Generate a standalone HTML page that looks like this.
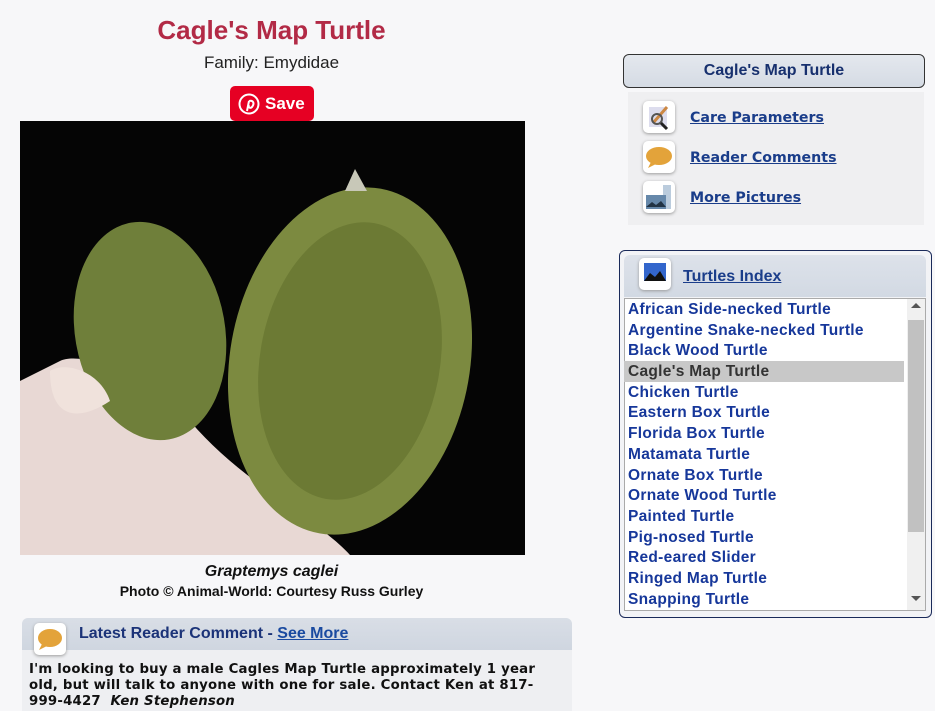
<!DOCTYPE html>
<html><head><meta charset="utf-8"><style>
body{margin:0;width:935px;height:711px;background:#f7f7f9;font-family:"Liberation Sans",sans-serif;position:relative;overflow:hidden}
.a{position:absolute}
h1{position:absolute;left:0;width:543px;top:15px;margin:0;text-align:center;color:#b22a46;font-size:26px;font-weight:bold}
.fam{left:0;width:543px;top:53px;text-align:center;font-size:17px;color:#222}
.save{left:230px;top:86px;width:84px;height:35px;background:#e60023;border-radius:5px;color:#fff;font-weight:bold;font-size:17px}
.vb{font-family:"DejaVu Sans",sans-serif;font-weight:bold}
.lnk{color:#1a3d8a;text-decoration:underline}
.list div{height:20.7px;line-height:21px;padding-left:4px;font-size:15.5px;font-weight:bold;color:#16379a;font-family:"Liberation Sans",sans-serif;letter-spacing:0.3px}
.ic{width:32px;height:32px;background:#fff;border-radius:5px;box-shadow:0 1px 3px #999}
</style></head><body>
<h1>Cagle's Map Turtle</h1>
<div class="a fam">Family: Emydidae</div>
<div class="a save"><svg class="a" style="left:8px;top:7px" width="22" height="22" viewBox="0 0 22 22"><circle cx="11" cy="11" r="9.5" fill="none" stroke="#fff" stroke-width="2"/><path d="M9 18 L11 8 M11 8 c4-1 6 2 3 6 c-2 2-4 0-3-2" fill="none" stroke="#fff" stroke-width="2"/></svg><span class="a" style="left:35px;top:8px">Save</span></div>
<svg class="a" style="left:20px;top:121px" width="505" height="434" viewBox="0 0 505 434">
<rect width="505" height="434" fill="#050505"/>
<path d="M40 240 C60 230 120 250 170 300 C220 360 300 400 330 434 L0 434 L0 260 Z" fill="#e8d8d4"/>
<ellipse cx="130" cy="210" rx="75" ry="110" transform="rotate(-10 130 210)" fill="#6f7f3a"/>
<ellipse cx="330" cy="240" rx="120" ry="175" transform="rotate(10 330 240)" fill="#7c8a40"/>
<ellipse cx="330" cy="240" rx="90" ry="140" transform="rotate(10 330 240)" fill="#6c7a34"/>
<path d="M325 70 l10-22 l12 22z" fill="#c8c8b8"/>
<path d="M30 250 C45 240 80 250 90 280 C60 300 30 300 30 250Z" fill="#f0e2dc"/>
</svg>
<div class="a" style="left:0;width:543px;top:563px;text-align:center;font-size:16px;font-weight:bold;font-style:italic;color:#111">Graptemys caglei</div>
<div class="a" style="left:0;width:543px;top:583px;text-align:center;font-size:14px;font-weight:bold;color:#111">Photo © Animal-World: Courtesy Russ Gurley</div>
<div class="a" style="left:22px;top:618px;width:550px;height:93px;background:#eeeff2;border-radius:6px 6px 0 0"></div>
<div class="a" style="left:22px;top:618px;width:550px;height:32px;background:linear-gradient(#d9dee6,#cfd6e0);border-radius:6px 6px 0 0"></div>
<div class="a ic" style="left:34px;top:623px"><svg width="32" height="32"><ellipse cx="16" cy="15" rx="12" ry="9" fill="#e3a33a"/><path d="M8 21 l-3 6 l8-4z" fill="#e3a33a"/></svg></div>
<div class="a" style="left:79px;top:625px;font-size:16px;font-weight:bold;color:#1b3378">Latest Reader Comment - <span class="lnk" style="color:#1a4aa0">See More</span></div>
<div class="a vb" style="left:29px;top:662px;width:535px;font-size:13.3px;line-height:16px;color:#111;letter-spacing:0.2px">I'm looking to buy a male Cagles Map Turtle approximately 1 year old, but will talk to anyone with one for sale. Contact Ken at 817-999-4427&nbsp; <i>Ken Stephenson</i></div>

<div class="a" style="left:623px;top:54px;width:300px;height:32px;border:1px solid #333;border-radius:6px;background:linear-gradient(#e4e8ee,#d5dbe4);text-align:center;line-height:32px;font-size:16px;font-weight:bold;color:#17306e">Cagle's Map Turtle</div>
<div class="a" style="left:628px;top:92px;width:296px;height:133px;background:#efeff1"></div>
<div class="a ic" style="left:643px;top:101px"><svg width="32" height="32"><rect x="6" y="6" width="18" height="20" fill="#dde"/><path d="M10 22 L24 6" stroke="#c84" stroke-width="3"/><circle cx="14" cy="18" r="5" fill="none" stroke="#555" stroke-width="2"/><path d="M18 22 l6 6" stroke="#222" stroke-width="3"/></svg></div>
<div class="a ic" style="left:643px;top:141px"><svg width="32" height="32"><ellipse cx="16" cy="15" rx="13" ry="9" fill="#e3a33a"/><path d="M8 21 l-3 6 l8-4z" fill="#e3a33a"/></svg></div>
<div class="a ic" style="left:643px;top:181px"><svg width="32" height="32"><rect x="20" y="4" width="8" height="24" fill="#bcd"/><rect x="3" y="14" width="20" height="14" fill="#68a"/><path d="M3 26 l6-5 l4 3 l5-4 l5 6z" fill="#234"/></svg></div>
<div class="a vb lnk" style="left:690px;top:110px;font-size:14.2px">Care Parameters</div>
<div class="a vb lnk" style="left:690px;top:150px;font-size:14.2px">Reader Comments</div>
<div class="a vb lnk" style="left:690px;top:190px;font-size:14.2px">More Pictures</div>

<div class="a" style="left:619px;top:250px;width:311px;height:366px;border:1px solid #1a2a5a;border-radius:6px;background:#f2f3f6"></div>
<div class="a" style="left:624px;top:255px;width:302px;height:42px;background:linear-gradient(#dde2ea,#d2d9e3);border-radius:6px 6px 0 0"></div>
<div class="a ic" style="left:639px;top:258px"><svg width="32" height="32"><rect x="5" y="5" width="22" height="18" fill="#36c"/><path d="M5 23 l6-8 l5 4 l5-6 l6 10z" fill="#111"/></svg></div>
<div class="a lnk" style="left:683px;top:268px;font-size:16px;font-weight:bold">Turtles Index</div>
<div class="a" style="left:624px;top:298px;width:302px;height:313px;background:#fff;border:1px solid #aaa;box-sizing:border-box"></div>
<div class="a" style="left:907px;top:299px;width:18px;height:311px;background:#f0f0f0"></div>
<div class="a" style="left:908px;top:320px;width:16px;height:212px;background:#c1c1c1"></div>
<div class="a" style="left:911px;top:303px;width:0;height:0;border:5px solid transparent;border-bottom-color:#555;border-top:0"></div>
<div class="a" style="left:911px;top:596px;width:0;height:0;border:5px solid transparent;border-top-color:#555;border-bottom:0"></div>
<div class="a list" style="left:624px;top:299px;width:280px">
<div>African Side-necked Turtle</div><div>Argentine Snake-necked Turtle</div><div>Black Wood Turtle</div><div style="background:#c8c8c8;color:#333">Cagle's Map Turtle</div><div>Chicken Turtle</div><div>Eastern Box Turtle</div><div>Florida Box Turtle</div><div>Matamata Turtle</div><div>Ornate Box Turtle</div><div>Ornate Wood Turtle</div><div>Painted Turtle</div><div>Pig-nosed Turtle</div><div>Red-eared Slider</div><div>Ringed Map Turtle</div><div>Snapping Turtle</div>
</div>
</body></html>
